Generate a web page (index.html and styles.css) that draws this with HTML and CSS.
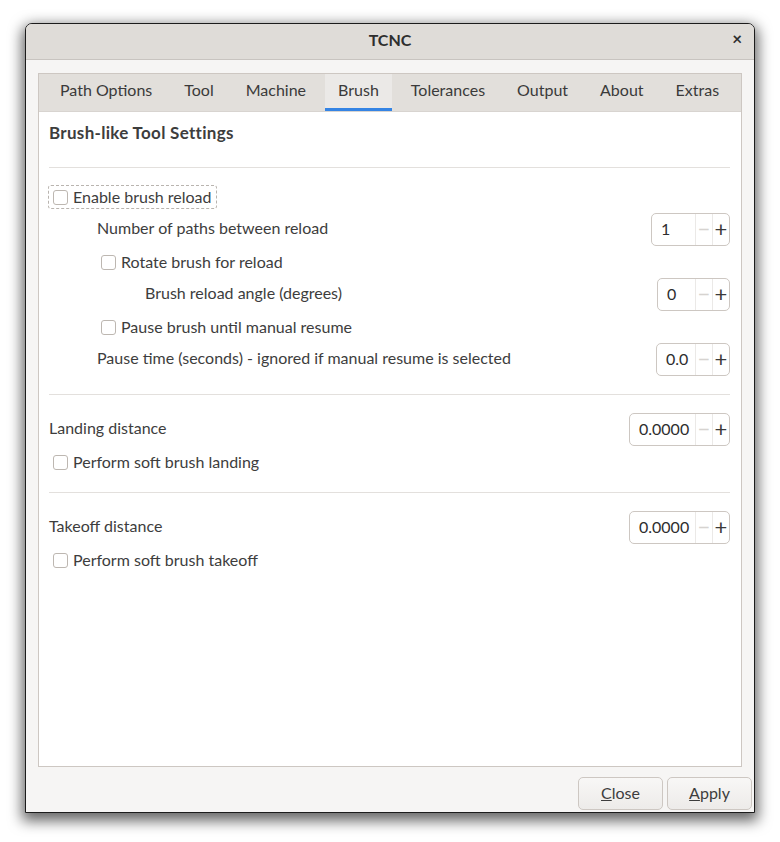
FILE: index.html
```html
<!DOCTYPE html>
<html lang="en">

<head>
    <meta charset="UTF-8">
    <title>TCNC</title>
    <link rel="stylesheet" href="styles.css">
</head>

<body>
    <div class="window">
        <div class="titlebar">
            <span class="title">TCNC</span>
            <span class="close">&times;</span>
        </div>

        <div class="dialog-body">
            <div class="notebook">
                <div class="tabs">
                    <div class="tab">Path Options</div>
                    <div class="tab">Tool</div>
                    <div class="tab">Machine</div>
                    <div class="tab active">Brush</div>
                    <div class="tab">Tolerances</div>
                    <div class="tab">Output</div>
                    <div class="tab">About</div>
                    <div class="tab">Extras</div>
                </div>

                <div class="page">
                    <div class="heading">Brush-like Tool Settings</div>
                    <div class="sep sep-top"></div>

                    <div class="check-row">
                        <label class="check focused"><span class="box"></span>Enable brush reload</label>
                    </div>

                    <div class="row indent-1">
                        <span>Number of paths between reload</span>
                        <div class="spin spin-int">
                            <span class="spin-value">1</span>
                            <span class="spin-btn minus">&minus;</span>
                            <span class="spin-btn plus">+</span>
                        </div>
                    </div>

                    <div class="check-row indent-1">
                        <label class="check"><span class="box"></span>Rotate brush for reload</label>
                    </div>

                    <div class="row indent-2">
                        <span>Brush reload angle (degrees)</span>
                        <div class="spin spin-angle">
                            <span class="spin-value">0</span>
                            <span class="spin-btn minus">&minus;</span>
                            <span class="spin-btn plus">+</span>
                        </div>
                    </div>

                    <div class="check-row indent-1">
                        <label class="check"><span class="box"></span>Pause brush until manual resume</label>
                    </div>

                    <div class="row indent-1">
                        <span>Pause time (seconds) - ignored if manual resume is selected</span>
                        <div class="spin spin-time">
                            <span class="spin-value">0.0</span>
                            <span class="spin-btn minus">&minus;</span>
                            <span class="spin-btn plus">+</span>
                        </div>
                    </div>

                    <div class="sep"></div>

                    <div class="row">
                        <span>Landing distance</span>
                        <div class="spin spin-dist">
                            <span class="spin-value">0.0000</span>
                            <span class="spin-btn minus">&minus;</span>
                            <span class="spin-btn plus">+</span>
                        </div>
                    </div>

                    <div class="check-row">
                        <label class="check"><span class="box"></span>Perform soft brush landing</label>
                    </div>

                    <div class="sep"></div>

                    <div class="row">
                        <span>Takeoff distance</span>
                        <div class="spin spin-dist">
                            <span class="spin-value">0.0000</span>
                            <span class="spin-btn minus">&minus;</span>
                            <span class="spin-btn plus">+</span>
                        </div>
                    </div>

                    <div class="check-row">
                        <label class="check"><span class="box"></span>Perform soft brush takeoff</label>
                    </div>
                </div>
            </div>

            <div class="actions">
                <button class="btn"><u>C</u>lose</button>
                <button class="btn"><u>A</u>pply</button>
            </div>
        </div>
    </div>
</body>

</html>
```

FILE: styles.css
```css
:root {
    --text-color: #3d3d3d;
    --border-color: #cdc7c2;
    --window-bg: #f6f5f4;
    --accent-color: #3584e4;
}

html,
body {
    background-color: #ffffff;
}

body {
    font-family: 'Lato', 'DejaVu Sans', sans-serif;
    font-size: 16px;
    line-height: 20px;
    color: var(--text-color);
    margin: 0;
    padding: 23px 0 29px 25px;
}

.window {
    width: 728px;
    height: 788px;
    border: 1px solid #1c1c1c;
    border-radius: 7px 7px 0 0;
    background: var(--window-bg);
    box-shadow: 0 5px 14px 3px rgba(0, 0, 0, 0.6);
    display: flex;
    flex-direction: column;
    overflow: hidden;
}

.titlebar {
    height: 35px;
    flex-shrink: 0;
    background: #dfdcd8;
    border-bottom: 1px solid #c8c4c0;
    display: flex;
    align-items: center;
    justify-content: center;
    position: relative;
}

.title {
    font-weight: 700;
    color: #2e2e2e;
    margin-top: -3px;
}

.close {
    position: absolute;
    right: 12px;
    top: 5px;
    font-weight: 700;
    font-size: 17px;
    color: #2e2e2e;
}

.dialog-body {
    flex: 1;
    display: flex;
    flex-direction: column;
    padding: 13px 2px 2px 12px;
}

.notebook {
    flex: 1;
    margin-right: 10px;
    border: 1px solid var(--border-color);
    background: #ffffff;
    display: flex;
    flex-direction: column;
}

.tabs {
    height: 37px;
    display: flex;
    gap: 6px;
    padding-left: 8px;
    background: #e2dfdb;
    border-bottom: 1px solid #d8d4d0;
}

.tab {
    padding: 0 13px 5px;
    display: flex;
    align-items: center;
    color: #3a3a3a;
}

.tab.active {
    background: #ebe9e7;
    box-shadow: inset 0 -3px 0 var(--accent-color);
}

.page {
    padding: 11px 11px 0 10px;
    display: flex;
    flex-direction: column;
    gap: 4px;
}

.heading {
    font-weight: 700;
    font-size: 17px;
    letter-spacing: 0.3px;
    height: 20px;
}

.sep {
    height: 1px;
    background: #e3e0dd;
    margin: 14px 0;
}

.sep.sep-top {
    margin: 20px 0 13px;
}

.row {
    height: 33px;
    display: flex;
    align-items: center;
    justify-content: space-between;
}

.row > span {
    margin-top: -3px;
}

.check-row {
    height: 24px;
    display: flex;
    align-items: center;
}

.indent-1 {
    padding-left: 48px;
}

.indent-2 {
    padding-left: 96px;
}

.check {
    display: inline-flex;
    align-items: center;
    gap: 5px;
    height: 22px;
    padding: 0 4px 0 4px;
    margin-left: -1px;
    border: 1px solid transparent;
    border-radius: 3px;
}

.check.focused {
    border: 1px dashed #b9b4af;
}

.box {
    width: 13px;
    height: 13px;
    border: 1px solid #bdb7b1;
    border-radius: 3px;
    background: #ffffff;
    margin-top: 1px;
}

.spin {
    height: 31px;
    display: flex;
    border: 1px solid var(--border-color);
    border-radius: 5px;
    background: #ffffff;
}

.spin-int {
    width: 77px;
}

.spin-angle {
    width: 71px;
}

.spin-time {
    width: 72px;
}

.spin-dist {
    width: 99px;
}

.spin-value {
    flex: 1;
    display: flex;
    align-items: center;
    padding-left: 9px;
    padding-bottom: 2px;
    color: #2e2e2e;
}

.spin-btn {
    width: 16px;
    display: flex;
    align-items: center;
    justify-content: center;
    border-left: 1px solid #ebe9e7;
    font-size: 22px;
    padding-bottom: 2px;
}

.spin-btn.minus {
    color: #d6d3d0;
}

.spin-btn.plus {
    color: #3a3a3a;
}

.actions {
    display: flex;
    justify-content: flex-end;
    gap: 4px;
    padding-top: 10px;
}

.btn {
    width: 85px;
    height: 33px;
    padding: 0 0 2px;
    font-family: inherit;
    font-size: 16px;
    color: var(--text-color);
    border: 1px solid var(--border-color);
    border-radius: 5px;
    background: linear-gradient(#f8f7f6, #edebe9);
}
```
